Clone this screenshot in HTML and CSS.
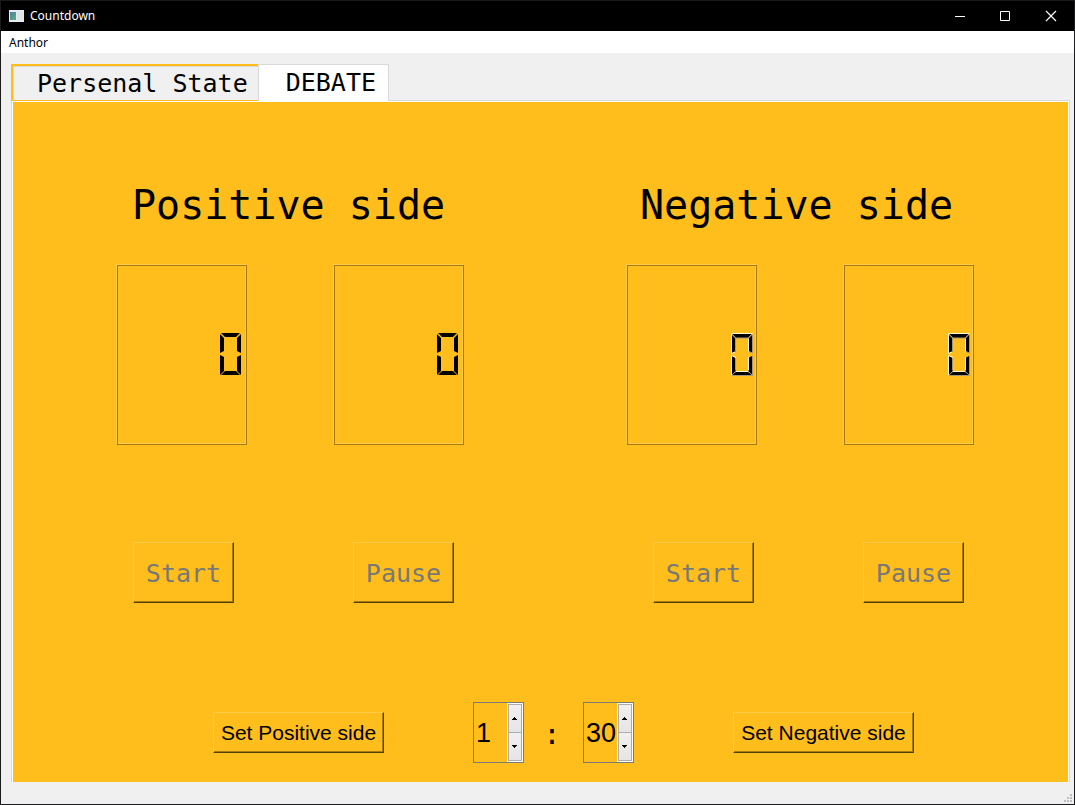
FILE: index.html
```html
<!DOCTYPE html>
<html lang="en">
<head>
<meta charset="utf-8">
<title>Countdown</title>
<link rel="stylesheet" href="styles.css">
</head>
<body>
<div class="window">
  <header class="titlebar">
    <svg class="app-icon" width="15" height="12" viewBox="0 0 15 12" aria-hidden="true">
      <defs>
        <linearGradient id="pane" x1="0" y1="0" x2="1" y2="1">
          <stop offset="0" stop-color="#4a7fa8"/>
          <stop offset="1" stop-color="#5fae7c"/>
        </linearGradient>
      </defs>
      <rect width="15" height="12" fill="#e9ecee"/>
      <rect x="1" y="2" width="6" height="8" fill="url(#pane)"/>
      <rect x="8" y="2" width="3" height="8" fill="#dfe3e5"/>
      <rect x="12" y="2" width="2" height="8" fill="#d5ead9"/>
    </svg>
    <h1 class="title">Countdown</h1>
    <button class="caption" type="button" aria-label="Minimize"><svg width="10" height="10" viewBox="0 0 10 10"><path d="M1 5.500H11" stroke="#fff"/></svg></button>
    <button class="caption" type="button" aria-label="Maximize"><svg width="10" height="10" viewBox="0 0 10 10"><path d="M.5 .5H9.500V9.500H.5Z" fill="none" stroke="#fff"/></svg></button>
    <button class="caption" type="button" aria-label="Close"><svg width="10" height="10" viewBox="0 0 10 10"><path d="M0 0L10 10M10 0L0 10" stroke="#fff" stroke-width="1.200"/></svg></button>
  </header>
  <nav class="menubar"><button class="menu-item" type="button">Anthor</button></nav>
  <main class="client">
    <div class="tabs" role="tablist">
      <button class="tab" type="button" role="tab" aria-selected="false">Persenal State</button>
      <button class="tab tab-active" type="button" role="tab" aria-selected="true">DEBATE</button>
    </div>
    <section class="panel" role="tabpanel">
      <div class="sides">
        <section class="side">
          <h2 class="side-title">Positive side</h2>
          <div class="displays">
            <div class="lcd" role="img" aria-label="0"><svg class="digit" width="22" height="43" viewBox="0 0 22 43"><use href="#zero" fill="#000"/></svg></div>
            <div class="lcd" role="img" aria-label="0"><svg class="digit" width="22" height="43" viewBox="0 0 22 43"><use href="#zero" fill="#000"/></svg></div>
          </div>
          <div class="actions">
            <button class="push" type="button" disabled>Start</button>
            <button class="push" type="button" disabled>Pause</button>
          </div>
        </section>
        <section class="side side-negative">
          <h2 class="side-title">Negative side</h2>
          <div class="displays">
            <div class="lcd" role="img" aria-label="0"><svg class="digit" width="22" height="43" viewBox="0 0 22 43"><use href="#zero-raised"/></svg></div>
            <div class="lcd" role="img" aria-label="0"><svg class="digit" width="22" height="43" viewBox="0 0 22 43"><use href="#zero-raised"/></svg></div>
          </div>
          <div class="actions">
            <button class="push" type="button" disabled>Start</button>
            <button class="push" type="button" disabled>Pause</button>
          </div>
        </section>
      </div>
      <form class="setup">
        <button class="push push-set" type="button">Set Positive side</button>
        <div class="spin">
          <input class="spin-value" type="text" inputmode="numeric" value="1" aria-label="Minutes">
          <div class="spin-steps">
            <button class="step" type="button" aria-label="More minutes"><svg width="5" height="3" viewBox="0 0 5 3"><path d="M2 0h1v1h1v1h1v1H0V2h1V1h1z"/></svg></button>
            <button class="step" type="button" aria-label="Fewer minutes"><svg width="5" height="3" viewBox="0 0 5 3"><path d="M0 0h5v1H4v1H3v1H2V2H1V1H0z"/></svg></button>
          </div>
        </div>
        <span class="colon">:</span>
        <div class="spin">
          <input class="spin-value" type="text" inputmode="numeric" value="30" aria-label="Seconds">
          <div class="spin-steps">
            <button class="step" type="button" aria-label="More seconds"><svg width="5" height="3" viewBox="0 0 5 3"><path d="M2 0h1v1h1v1h1v1H0V2h1V1h1z"/></svg></button>
            <button class="step" type="button" aria-label="Fewer seconds"><svg width="5" height="3" viewBox="0 0 5 3"><path d="M0 0h5v1H4v1H3v1H2V2H1V1H0z"/></svg></button>
          </div>
        </div>
        <button class="push push-set push-negative" type="button">Set Negative side</button>
      </form>
    </section>
  </main>
  <footer class="statusbar">
    <svg width="8" height="8" viewBox="0 0 8 8" aria-hidden="true"><path fill="#bfbfbf" d="M6 0h2v2H6zM3 3h2v2H3zM6 3h2v2H6zM0 6h2v2H0zM3 6h2v2H3zM6 6h2v2H6z"/></svg>
  </footer>
</div>
<svg class="symbols" width="0" height="0" aria-hidden="true">
  <defs>
    <path id="zero" d="M1 0H20L16 4H5ZM0 1L4 5V18L0 20ZM21 1V20L17 18V5ZM0 22L4 24V38L0 42ZM21 22V42L17 38V24ZM5 38H16L20 42H1Z"/>
    <g id="zero-raised">
      <path fill="#000" d="M1 1H21L17 5H5ZM1 2L5 6V18L1 20ZM21 2V20L17 18V6ZM1 23L5 25V38L1 42ZM21 23V42L17 38V25ZM5 39H17L21 42H1Z"/>
      <path fill="none" stroke="#fff8dc" d="M.5 .5H21.500M.5 1V20.500L4 19M.5 42V22.500L5 24.500M17.500 18.500V5.500M17.500 24V37.500M5 38.500H17"/>
      <path fill="none" stroke="#a8987a" d="M21 1L17 5H5L1 1M4.500 5V18M21.500 2V20L18 18.500M4.500 25V37.500M21.500 23V42.500H1M1 42L5 38M21 42L17 38"/>
    </g>
  </defs>
</svg>
</body>
</html>
```

FILE: styles.css
```css
* { box-sizing: border-box; }

body {
  margin: 0;
  background: #f0f0f0;
  color: #000;
  font-family: "Noto Sans", "Open Sans", sans-serif;
  font-size: 12px;
}

button, input { font: inherit; color: inherit; border-radius: 0; margin: 0; }
h1, h2 { margin: 0; font-weight: 400; }
svg { display: block; overflow: visible; }

.window {
  display: flex;
  flex-direction: column;
  min-height: 100vh;
  border: 1px solid #1a1a1c;
}

.titlebar {
  display: flex;
  align-items: center;
  height: 30px;
  padding-left: 8px;
  background: #000;
  color: #fff;
}
.app-icon { margin-right: 6px; }
.title { flex: 1; font-size: 12px; line-height: 16px; }
.caption {
  display: flex;
  align-items: center;
  justify-content: center;
  width: 46px;
  height: 28px;
  padding: 0;
  border: 0;
  background: none;
}

.menubar { height: 22px; background: #fff; }
.menu-item {
  height: 22px;
  padding: 2px 8px 0;
  border: 0;
  background: none;
  line-height: 20px;
}

.client {
  display: flex;
  flex: 1;
  flex-direction: column;
  padding: 11px 4px 0 10px;
}

.tabs { display: flex; height: 37px; padding-right: 1px; margin-bottom: -1px; }
.tab {
  z-index: 1;
  padding: 2px 10px 0 24px;
  border: 2px solid #ffbe1b;
  border-right: 0;
  border-bottom-width: 1px;
  background: #f0f0f0;
  box-shadow: inset 1px 1px #d9d9d9;
  font-family: "DejaVu Sans Mono", monospace;
  font-size: 25px;
  line-height: 32px;
  white-space: nowrap;
}
.tab-active {
  padding: 0 12px 0 27px;
  border: 1px solid #d9d9d9;
  border-bottom: 0;
  background: #fff;
  box-shadow: none;
}

.panel {
  display: flex;
  flex: 1;
  flex-direction: column;
  justify-content: space-between;
  padding: 75px 0 19px;
  border: 1px solid #d9d9d9;
  border-bottom: 0;
  background: #ffbe1b;
  box-shadow: inset 1px 1px #fff, inset -1px 0 #fff;
}

.sides {
  display: flex;
  justify-content: center;
  gap: 163px;
  padding-left: 10px;
}
.side { width: 347px; }
.side-title {
  padding-left: 15px;
  font-family: "DejaVu Sans Mono", monospace;
  font-size: 40px;
  line-height: 58px;
  white-space: nowrap;
}
.side-negative .side-title { padding-left: 13px; }

.displays { display: flex; justify-content: space-between; margin-top: 31px; }
.lcd {
  display: flex;
  align-items: center;
  justify-content: flex-end;
  width: 130px;
  height: 180px;
  padding-right: 4px;
  border: 1px solid #a67c12;
  box-shadow: -1px -1px #ffcb49, inset -1px -1px #ffcb49;
}
.side-negative .lcd { padding-right: 3px; }
.digit { margin-top: -2px; }

.actions {
  display: flex;
  gap: 119px;
  margin-top: 97px;
  padding-left: 16px;
}
.side-negative .actions { gap: 109px; padding-left: 26px; }

.push {
  width: 101px;
  height: 61px;
  padding: 0;
  border: 1px solid #ffcb49;
  border-right-color: #54400d;
  border-bottom-color: #54400d;
  background: #ffbe1b;
  box-shadow: inset -1px -1px #a67c12;
  font-family: "DejaVu Sans Mono", monospace;
  font-size: 25px;
  white-space: nowrap;
}
.push:disabled { padding-top: 2px; color: #787878; }

.setup {
  display: flex;
  align-items: center;
  justify-content: center;
  padding-left: 46px;
}
.push-set {
  width: 171px;
  height: 41px;
  margin-right: 89px;
  font-family: "Liberation Sans", Arial, sans-serif;
  font-size: 21px;
}
.push-negative { width: 181px; margin: 0 0 0 99px; }

.spin {
  display: flex;
  width: 51px;
  height: 61px;
  border: 1px solid #7a7a7a;
}
.spin-value {
  flex: 1;
  min-width: 0;
  padding: 2px 0 0 2px;
  border: 0;
  outline: 0;
  background: none;
  font-family: "Liberation Sans", Arial, sans-serif;
  font-size: 27px;
}
.spin-steps {
  display: flex;
  flex-direction: column;
  width: 16px;
  padding: 1px;
  background: #fff;
}
.step {
  display: flex;
  flex: 1;
  align-items: center;
  justify-content: center;
  padding: 0 1px 0 0;
  border: 1px solid #acacac;
  background: linear-gradient(#f0f0f0, #e5e5e5);
}
.step + .step { border-top: 0; }
.colon {
  width: 59px;
  padding: 4px 3px 0 0;
  font-family: "DejaVu Sans Mono", monospace;
  font-size: 28px;
  text-align: center;
}

.statusbar {
  display: flex;
  align-items: flex-end;
  justify-content: flex-end;
  height: 22px;
  padding: 2px;
}
.symbols { position: absolute; }
```
